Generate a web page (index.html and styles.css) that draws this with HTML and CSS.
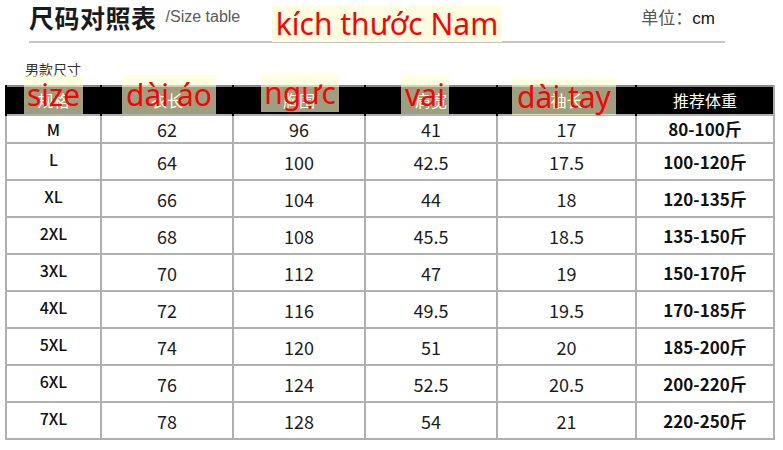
FILE: index.html
```html
<!DOCTYPE html>
<html>
<head>
<meta charset="utf-8">
<link rel="stylesheet" href="styles.css">
</head>
<body>
<div class="page">
  <div class="title-row">
    <span class="title">尺码对照表</span>
    <span class="subtitle">/Size table</span>
    <span class="spacer"></span>
    <span class="unit"><span class="unit-label">单位：</span>cm</span>
  </div>
  <div class="caption">男款尺寸</div>
  <table class="sizes">
    <colgroup>
      <col class="c1"><col class="c2"><col class="c3"><col class="c4"><col class="c5"><col class="c6">
    </colgroup>
    <thead>
      <tr><th>规格</th><th>衣长</th><th>胸围</th><th>肩宽</th><th>袖长</th><th>推荐体重</th></tr>
    </thead>
    <tbody>
      <tr class="first"><td class="sz">M</td><td>62</td><td>96</td><td>41</td><td>17</td><td class="wt">80-100斤</td></tr>
      <tr><td class="sz">L</td><td>64</td><td>100</td><td>42.5</td><td>17.5</td><td class="wt">100-120斤</td></tr>
      <tr><td class="sz">XL</td><td>66</td><td>104</td><td>44</td><td>18</td><td class="wt">120-135斤</td></tr>
      <tr><td class="sz">2XL</td><td>68</td><td>108</td><td>45.5</td><td>18.5</td><td class="wt">135-150斤</td></tr>
      <tr><td class="sz">3XL</td><td>70</td><td>112</td><td>47</td><td>19</td><td class="wt">150-170斤</td></tr>
      <tr><td class="sz">4XL</td><td>72</td><td>116</td><td>49.5</td><td>19.5</td><td class="wt">170-185斤</td></tr>
      <tr><td class="sz">5XL</td><td>74</td><td>120</td><td>51</td><td>20</td><td class="wt">185-200斤</td></tr>
      <tr><td class="sz">6XL</td><td>76</td><td>124</td><td>52.5</td><td>20.5</td><td class="wt">200-220斤</td></tr>
      <tr><td class="sz">7XL</td><td>78</td><td>128</td><td>54</td><td>21</td><td class="wt">220-250斤</td></tr>
    </tbody>
  </table>

  <span class="note note-title">kích thước Nam</span>
  <span class="note note-h n-size">size</span>
  <span class="note note-h n-len">dài áo</span>
  <span class="note note-h n-chest">ngực</span>
  <span class="note note-h n-shoulder">vai</span>
  <span class="note note-h n-sleeve">dài tay</span>
</div>
</body>
</html>
```

FILE: styles.css
```css
html, body {
  margin: 0;
  padding: 0;
  background: #fff;
}
.page {
  position: relative;
  width: 783px;
  height: 450px;
  overflow: hidden;
  font-family: "Noto Sans CJK SC", "Noto Sans", sans-serif;
}
.title-row {
  display: flex;
  align-items: flex-start;
  height: 41px;
  margin: 0 58px 0 29px;
  border-bottom: 2px solid #c4c4c4;
}
.title {
  font-size: 25px;
  font-weight: bold;
  color: #1a1a1a;
  line-height: 28px;
  letter-spacing: 0.5px;
  margin-top: 3px;
}
.subtitle {
  font-family: "Liberation Sans", Arial, sans-serif;
  font-size: 16px;
  line-height: 18px;
  color: #5a5a5a;
  margin-left: 9px;
  margin-top: 8px;
}
.spacer { flex: 1; }
.unit {
  font-family: "Liberation Sans", "Noto Sans CJK SC", sans-serif;
  font-size: 17px;
  line-height: 20px;
  color: #111;
  margin-right: 10px;
  margin-top: 7px;
}
.unit-label {
  font-family: "Noto Sans CJK SC", sans-serif;
  color: #555;
}
.caption {
  font-size: 14px;
  color: #333;
  margin: 16px 0 0 25px;
  line-height: 20px;
  height: 26px;
}
.sizes {
  margin-left: 5px;
  width: 768px;
  border-collapse: collapse;
  table-layout: fixed;
  border: 2px solid #a8a8a8;
  border-top-color: #888;
}
.c1 { width: 95px; }
.c2, .c3, .c4 { width: 132px; }
.c5 { width: 139px; }
.c6 { width: 138px; }
.sizes th {
  background: #000;
  color: #fff;
  font-weight: normal;
  font-size: 16px;
  height: 27px;
  padding: 0;
  line-height: 27px;
  border-left: 2px solid #000;
}
.sizes td {
  border: 2px solid #b0b0b0;
  height: 35px;
  padding: 0;
  text-align: center;
  font-size: 18px;
  color: #1c1c1c;
  line-height: 20px;
  vertical-align: middle;
}
.sizes tr.first td {
  height: 26px;
}
.sizes td.sz {
  font-size: 16px;
  font-weight: 500;
  color: #111;
  vertical-align: top;
  line-height: 30px;
}
.sizes tr.first td.sz {
  line-height: 26px;
}
.sizes td.wt {
  font-weight: bold;
  font-size: 17px;
  color: #111;
}
.note {
  position: absolute;
  background: rgba(255, 255, 206, 0.62);
  color: #ff0000;
  font-family: "Noto Sans", "DejaVu Sans", sans-serif;
  line-height: 1;
  white-space: nowrap;
  display: flex;
  align-items: center;
  justify-content: center;
}
.note-title {
  left: 272px;
  top: 6px;
  width: 230px;
  height: 36px;
  font-size: 30px;
  background: #fffde0;
}
.note-h {
  font-size: 30px;
  height: 39px;
}
.n-size { left: 24px; top: 75px; width: 59px; }
.n-len { left: 122px; top: 75px; width: 94px; }
.n-chest { left: 261px; top: 74px; width: 78px; height: 38px; }
.n-shoulder { left: 401px; top: 76px; width: 48px; height: 38px; }
.n-sleeve { left: 512px; top: 78px; width: 104px; height: 37px; }
```
